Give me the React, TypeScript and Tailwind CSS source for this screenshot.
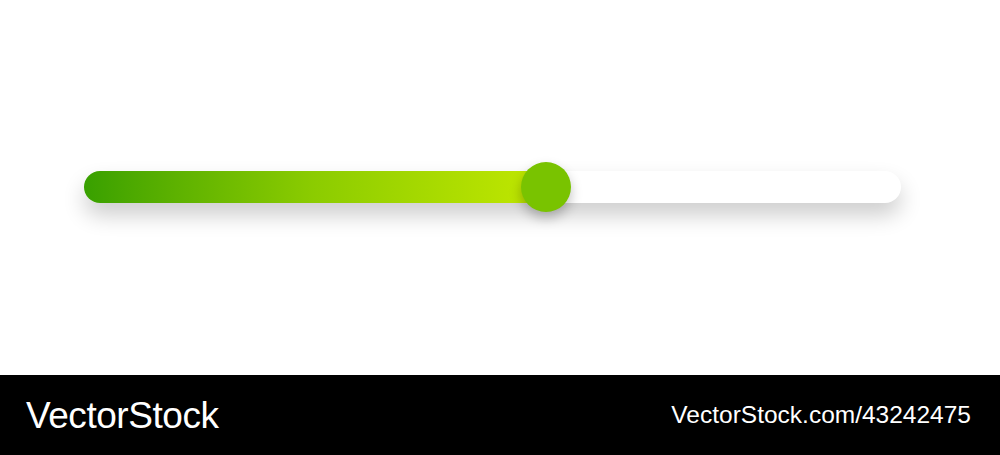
export default function App() {
  const value = 56.5; // percent of the track that is filled

  return (
    <div className="w-[1000px] h-[455px] flex flex-col bg-white font-['Liberation_Sans',Arial,sans-serif]">
      {/* Slider area */}
      <div className="h-[375px] pt-[171px] px-[84px]">
        <div className="relative h-[32px] w-[817px] rounded-full bg-white shadow-[0_12px_22px_rgba(0,0,0,0.2)]">
          <div
            className="h-full rounded-l-full bg-gradient-to-r from-[#38a000] via-[#8ccc00] to-[#c2e800]"
            style={{ width: `${value}%` }}
          />
          <div
            className="absolute top-[-9px] w-[50px] h-[50px] -ml-[25px] rounded-full bg-[#79c300] shadow-[0_6px_12px_rgba(0,0,0,0.25)]"
            style={{ left: `${value}%` }}
          />
        </div>
      </div>

      {/* Footer bar */}
      <div className="h-[80px] bg-black flex items-center justify-between pl-[26px] pr-[29px] text-white">
        <span className="text-[37px] tracking-[-0.012em] leading-none">VectorStock</span>
        <span className="text-[24.5px] leading-none">VectorStock.com/43242475</span>
      </div>
    </div>
  );
}
